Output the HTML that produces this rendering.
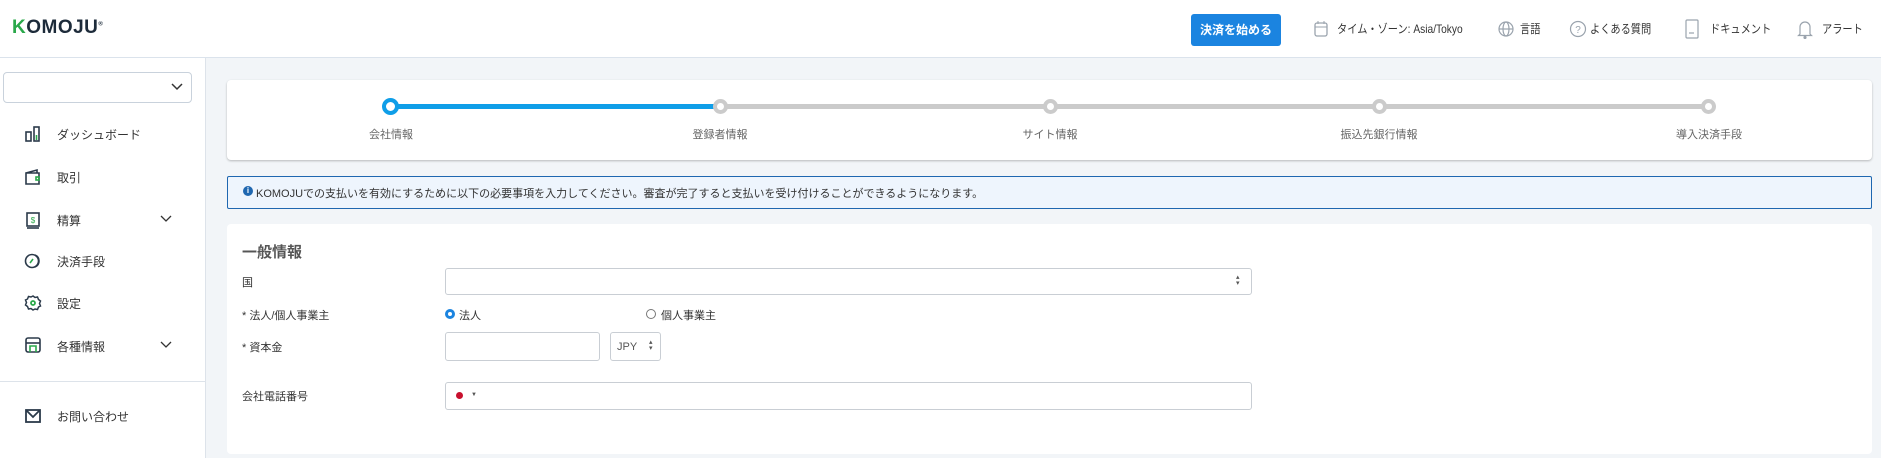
<!DOCTYPE html>
<html><head><meta charset="utf-8"><style>
*{box-sizing:border-box;margin:0;padding:0}
body{width:1881px;height:440px;overflow:hidden;background:#f2f5f8;font-family:"Liberation Sans","Noto Sans CJK JP",sans-serif;color:#333;font-size:12px;position:relative}
.a{position:absolute}
.hdr{left:0;top:0;width:1881px;height:58px;background:#fff;border-bottom:1px solid #dbe3ec}
.logo{left:12px;top:17px;font-size:19px;font-weight:bold;letter-spacing:0.5px;color:#1d2b3a}
.btn{left:1191px;top:14px;width:90px;height:32px;background:#1b84e0;border-radius:3px;color:#fff;font-weight:bold;font-size:12px;text-align:center;line-height:32px}
.hi{top:22px;font-size:12px;color:#333;line-height:14px;transform:scaleX(.85);transform-origin:left}
.side{left:0;top:58px;width:206px;height:400px;background:#fff;border-right:1px solid #dde3ea}
.sel{left:3px;top:72px;width:189px;height:31px;border:1px solid #c9d2dc;border-radius:4px;background:#fff}
.it{left:57px;font-size:12px;color:#333}
.ic{left:24px;width:18px;height:18px}
.card{background:#fff;border-radius:4px;box-shadow:0 1px 2px rgba(0,0,0,.25)}
.lbl{left:242px;font-size:11px;color:#333}
.inp{background:#fff;border:1px solid #c9ced4;border-radius:3px}
.sl{font-size:11px;color:#666;top:126px;transform:translateX(-50%)}
</style></head><body>
<div class="a hdr"></div>
<div class="a logo"><span style="color:#2aa84a">K</span>OMOJU<sup style="font-size:6px">®</sup></div>
<div class="a btn">決済を始める</div>
<svg class="a" style="left:1313px;top:20px" width="16" height="18" viewBox="0 0 16 18"><rect x="2" y="3" width="12" height="13" rx="2" fill="none" stroke="#9aa3ad" stroke-width="1.3"/><line x1="2" y1="7" x2="14" y2="7" stroke="#9aa3ad"/><line x1="5" y1="1" x2="5" y2="4" stroke="#9aa3ad"/><line x1="11" y1="1" x2="11" y2="4" stroke="#9aa3ad"/></svg>
<div class="a hi" style="left:1337px">タイム・ゾーン: Asia/Tokyo</div>
<svg class="a" style="left:1497px;top:20px" width="18" height="18" viewBox="0 0 18 18" fill="none" stroke="#9aa3ad" stroke-width="1.2"><circle cx="9" cy="9" r="7"/><ellipse cx="9" cy="9" rx="3" ry="7"/><line x1="2" y1="9" x2="16" y2="9"/></svg>
<div class="a hi" style="left:1520px">言語</div>
<svg class="a" style="left:1569px;top:20px" width="18" height="18" viewBox="0 0 18 18"><circle cx="9" cy="9" r="7.5" fill="none" stroke="#9aa3ad" stroke-width="1.2"/><text x="9" y="13" font-size="10" text-anchor="middle" fill="#9aa3ad" font-family="Liberation Sans">?</text></svg>
<div class="a hi" style="left:1590px">よくある質問</div>
<svg class="a" style="left:1684px;top:19px" width="16" height="20" viewBox="0 0 16 20" fill="none" stroke="#9aa3ad" stroke-width="1.2"><rect x="2" y="1" width="12" height="18" rx="1"/><line x1="5" y1="14" x2="10" y2="14"/></svg>
<div class="a hi" style="left:1710px">ドキュメント</div>
<svg class="a" style="left:1797px;top:19px" width="16" height="20" viewBox="0 0 16 20" fill="none" stroke="#9aa3ad" stroke-width="1.2"><path d="M3 15V8a5 5 0 0 1 10 0v7l1.5 1.5h-13z"/><circle cx="8" cy="18.5" r="1" fill="#9aa3ad"/></svg>
<div class="a hi" style="left:1822px">アラート</div>

<div class="a side"></div>
<div class="a sel"></div>
<svg class="a" style="left:171px;top:82px" width="12" height="10" viewBox="0 0 12 10"><path d="M1 2l5 5 5-5" fill="none" stroke="#333" stroke-width="1.5"/></svg>
<svg class="a ic" style="top:125px" viewBox="0 0 18 18" fill="none" stroke="#2b3a4a" stroke-width="1.6"><rect x="2" y="7" width="5" height="9"/><rect x="10" y="2" width="5" height="14"/><line x1="12.5" y1="10" x2="12.5" y2="15" stroke="#2aa84a"/></svg>
<div class="a it" style="top:126px">ダッシュボード</div>
<svg class="a ic" style="top:168px" viewBox="0 0 18 18" fill="none" stroke="#2b3a4a" stroke-width="1.6"><path d="M2 5h13v11H2zM2 5l11-3v3"/><rect x="12" y="9" width="3" height="3" stroke="#2aa84a"/></svg>
<div class="a it" style="top:169px">取引</div>
<svg class="a ic" style="top:211px" viewBox="0 0 18 18" fill="none" stroke="#2b3a4a" stroke-width="1.6"><rect x="3" y="2" width="12" height="13"/><line x1="3" y1="17" x2="15" y2="17"/><text x="9" y="12" font-size="8" fill="#2aa84a" stroke="none" text-anchor="middle">$</text></svg>
<div class="a it" style="top:212px">精算</div>
<svg class="a" style="left:160px;top:214px" width="12" height="9" viewBox="0 0 12 9"><path d="M1 2l5 5 5-5" fill="none" stroke="#333" stroke-width="1.3"/></svg>
<svg class="a ic" style="top:252px" viewBox="0 0 18 18" fill="none" stroke="#2b3a4a" stroke-width="1.6"><circle cx="8" cy="9" r="6.5"/><path d="M11 3a6.5 6.5 0 0 1 0 12"/><line x1="6" y1="11" x2="9" y2="7" stroke="#2aa84a"/></svg>
<div class="a it" style="top:253px">決済手段</div>
<svg class="a ic" style="top:294px" viewBox="0 0 18 18" fill="none" stroke="#2b3a4a" stroke-width="1.8"><path d="M9 2l2 1.5 2.5-.5 1 2.5 2 1.5-1 2.5 1 2.5-2 1-1 2.5-2.5-.5L9 16l-2-1.5-2.5.5-1-2.5-2-1.5 1-2.5-1-2.5 2-1 1-2.5 2.5.5z" stroke-width="1.5"/><circle cx="9" cy="9" r="2" stroke="#2aa84a"/></svg>
<div class="a it" style="top:295px">設定</div>
<svg class="a ic" style="top:336px" viewBox="0 0 18 18" fill="none" stroke="#2b3a4a" stroke-width="1.6"><rect x="2" y="2" width="14" height="14" rx="2"/><line x1="2" y1="7" x2="16" y2="7"/><path d="M6 16v-6h6v6" stroke="#2aa84a"/></svg>
<div class="a it" style="top:338px">各種情報</div>
<svg class="a" style="left:160px;top:340px" width="12" height="9" viewBox="0 0 12 9"><path d="M1 2l5 5 5-5" fill="none" stroke="#333" stroke-width="1.3"/></svg>
<div class="a" style="left:0;top:381px;width:205px;height:1px;background:#dde3ea"></div>
<svg class="a ic" style="top:407px" viewBox="0 0 18 18" fill="none" stroke="#2b3a4a" stroke-width="1.8"><rect x="2" y="3" width="14" height="12"/><path d="M2 3l7 7 7-7"/></svg>
<div class="a it" style="top:408px">お問い合わせ</div>

<div class="a card" style="left:227px;top:80px;width:1645px;height:80px"></div>
<div class="a" style="left:390px;top:104px;width:1319px;height:5px;background:#cbcbcb"></div>
<div class="a" style="left:390px;top:104px;width:330px;height:5px;background:#0f9ee8"></div>
<div class="a" style="left:382px;top:98px;width:17px;height:17px;border-radius:50%;background:#fff;border:4px solid #0f9ee8"></div>
<div class="a" style="left:713px;top:99px;width:15px;height:15px;border-radius:50%;background:#fff;border:4px solid #cbcbcb"></div>
<div class="a" style="left:1043px;top:99px;width:15px;height:15px;border-radius:50%;background:#fff;border:4px solid #cbcbcb"></div>
<div class="a" style="left:1372px;top:99px;width:15px;height:15px;border-radius:50%;background:#fff;border:4px solid #cbcbcb"></div>
<div class="a" style="left:1701px;top:99px;width:15px;height:15px;border-radius:50%;background:#fff;border:4px solid #cbcbcb"></div>
<div class="a sl" style="left:391px">会社情報</div>
<div class="a sl" style="left:720px">登録者情報</div>
<div class="a sl" style="left:1050px">サイト情報</div>
<div class="a sl" style="left:1379px">振込先銀行情報</div>
<div class="a sl" style="left:1709px">導入決済手段</div>

<div class="a" style="left:227px;top:176px;width:1645px;height:33px;background:#eef5fd;border:1px solid #1f67b0;border-radius:2px"></div>
<div class="a" style="left:243px;top:186px;width:10px;height:10px;border-radius:50%;background:#1f67b0;color:#fff;font-size:8px;font-weight:bold;text-align:center;line-height:10px">i</div>
<div class="a" style="left:256px;top:185px;font-size:11px;color:#333">KOMOJUでの支払いを有効にするために以下の必要事項を入力してください。審査が完了すると支払いを受け付けることができるようになります。</div>

<div class="a card" style="left:227px;top:224px;width:1645px;height:230px;box-shadow:none"></div>
<div class="a" style="left:242px;top:241px;font-size:15px;color:#555;font-weight:bold">一般情報</div>
<div class="a lbl" style="top:274px">国</div>
<div class="a inp" style="left:445px;top:268px;width:807px;height:27px"></div>
<div class="a" style="left:1236px;top:275px;font-size:7px;color:#555;line-height:6px">▴<br>▾</div>
<div class="a lbl" style="top:307px">* 法人/個人事業主</div>
<div class="a" style="left:445px;top:309px;width:10px;height:10px;border-radius:50%;border:3px solid #1b84e0;background:#fff"></div>
<div class="a lbl" style="left:459px;top:307px">法人</div>
<div class="a" style="left:646px;top:309px;width:10px;height:10px;border-radius:50%;border:1px solid #777"></div>
<div class="a lbl" style="left:661px;top:307px">個人事業主</div>
<div class="a lbl" style="top:339px">* 資本金</div>
<div class="a inp" style="left:445px;top:332px;width:155px;height:29px"></div>
<div class="a inp" style="left:610px;top:332px;width:51px;height:29px"></div>
<div class="a" style="left:617px;top:341px;font-size:11px;color:#555">JPY</div>
<div class="a" style="left:649px;top:340px;font-size:7px;color:#555;line-height:6px">▴<br>▾</div>
<div class="a lbl" style="top:388px">会社電話番号</div>
<div class="a inp" style="left:445px;top:382px;width:807px;height:28px"></div>
<div class="a" style="left:456px;top:392px;width:7px;height:7px;border-radius:50%;background:#c8102e"></div>
<div class="a" style="left:471px;top:392px;font-size:6px;color:#555">▼</div>
</body></html>
